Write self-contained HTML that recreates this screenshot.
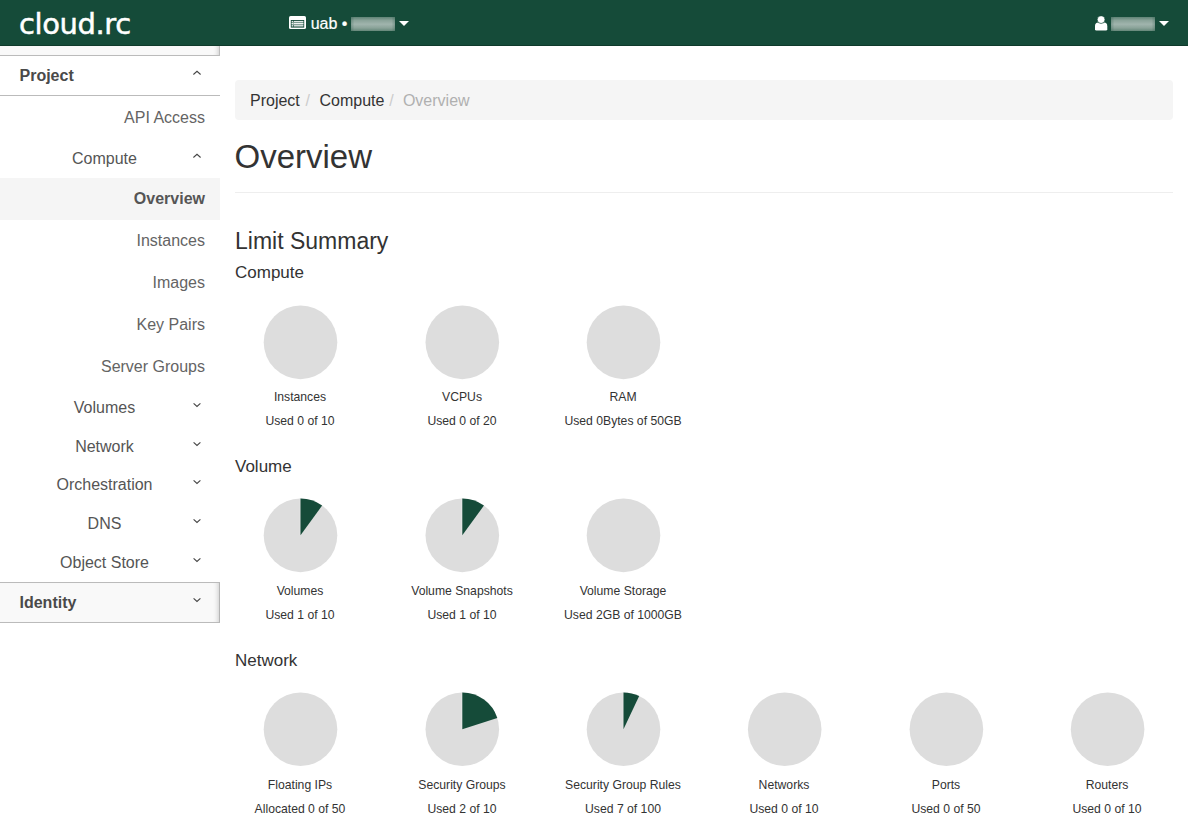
<!DOCTYPE html>
<html lang="en">
<head>
<meta charset="utf-8">
<title>Overview - cloud.rc</title>
<style>
*{box-sizing:border-box}
html,body{margin:0;padding:0}
body{width:1188px;height:826px;overflow:hidden;background:#fff;font-family:"Liberation Sans",sans-serif;font-size:14px;line-height:20px;color:#333;position:relative}
#navbar{position:absolute;left:0;top:0;width:1188px;height:46px;background:#154b39;border-bottom:1px solid #0f3a2b}
#logo{position:absolute;left:19px;top:6px;font-family:"DejaVu Sans","Liberation Sans",sans-serif;font-size:29px;line-height:36px;color:#fff;letter-spacing:-0.4px;-webkit-text-stroke:0.5px #fff}
.ctx{position:absolute;-webkit-text-stroke:0.2px #fff;top:14px;height:20px;color:#fff;font-size:16px;line-height:20px;white-space:nowrap}
.blur{position:absolute;width:44px;height:14px;background:linear-gradient(to right,rgba(21,75,57,.25),rgba(21,75,57,0) 8%,rgba(21,75,57,0) 92%,rgba(21,75,57,.25)),linear-gradient(to bottom,#5f8376 0%,#8ba49a 25%,#a0b4ad 52%,#8aa399 78%,#658779 100%)}
.caret{position:absolute;width:0;height:0;border-left:5.2px solid transparent;border-right:5.2px solid transparent;border-top:5.6px solid #fff}
.nv{position:absolute;display:block}
#sidebar{position:absolute;left:0;top:46px;width:220px;height:780px}
#sidebar .top{height:10px;background:#f9f9f9;border-right:1px solid #bdbdbd;border-bottom:1px solid #bbb;box-shadow:inset -5px 0 5px -4px rgba(0,0,0,.18)}
.hdr{position:relative;height:40px;border-bottom:1px solid #bbb;font-weight:bold;font-size:16px;color:#4a4a4a;padding:10px 0 0 19.5px;line-height:20px;background:#fff}
.hdr.closed{background:#f9f9f9;border-top:1px solid #bbb;border-right:1px solid #b5b5b5;box-shadow:inset -5px 0 5px -4px rgba(0,0,0,.18)}
.chev{position:absolute;left:192px;width:10px;height:6px}
.item{position:absolute;right:0;width:220px;height:42px;text-align:right;padding:11px 15px 0 0;font-size:16px;line-height:20px;color:#646464}
.item.active{background:#f5f5f5;font-weight:bold;color:#555}
.sub{position:absolute;left:0;width:209px;text-align:center;font-size:16px;line-height:20px;color:#555}
#main{position:absolute;left:235px;top:46px;width:938px}
#crumb{position:absolute;left:0;top:34px;width:938px;height:40px;background:#f5f5f5;border-radius:4px;font-size:16px;line-height:20px;padding:11px 15px 9px;color:#b0b0b0;white-space:nowrap}
#crumb b{font-weight:normal;color:#333}
#crumb i{font-style:normal;color:#ccc;padding:0 5.2px 0 5.6px}
h1{position:absolute;left:-0.5px;top:91px;margin:0;font-size:33px;line-height:40px;font-weight:normal;color:#333}
#hr{position:absolute;left:0;top:146px;width:938px;height:1px;background:#eee}
h3{position:absolute;left:0;top:181px;margin:0;font-size:23px;line-height:28px;font-weight:normal;color:#333}
h4{position:absolute;left:0;margin:0;font-size:17px;line-height:20px;font-weight:normal;color:#333}
.pie{position:absolute;width:162px;height:0;font-size:12.2px;line-height:17px;color:#333}
.pie svg{position:absolute;left:31px;top:0;width:100px;height:100px}
.pie .t,.pie .u{position:absolute;left:-19px;width:200px;text-align:center;white-space:nowrap}
</style>
</head>
<body>
<div id="navbar">
  <div id="logo">cloud.rc</div>
  <svg class="nv" style="left:289px;top:16px" width="17" height="13" viewBox="0 0 17 13"><rect x="0" y="0" width="17" height="13" rx="1.6" fill="#fff"/><rect x="1.8" y="4" width="13.4" height="7.6" fill="#154b39"/><g fill="#fff" opacity=".88"><rect x="2.6" y="4.9" width="1.6" height="1.1"/><rect x="4.8" y="4.9" width="9.6" height="1.1"/><rect x="2.6" y="7" width="1.6" height="1.1"/><rect x="4.8" y="7" width="9.6" height="1.1"/><rect x="2.6" y="9.1" width="1.6" height="1.4"/><rect x="4.8" y="9.1" width="9.6" height="1.4"/></g><rect x="2.6" y="6" width="11.8" height="3.1" fill="#fff" opacity=".45"/></svg>
  <div class="ctx" style="left:310.7px">uab •</div>
  <div class="blur" style="left:351px;top:17px"></div>
  <div class="caret" style="left:399px;top:21px"></div>
  <svg class="nv" style="left:1095px;top:16px" width="13" height="15" viewBox="0 0 13 15"><path d="M0 13.2 V10.2 Q0 6.6 3.2 6.6 H9.1 Q12.3 6.6 12.3 10.2 V13.2 Q12.3 14.6 10.9 14.6 H1.4 Q0 14.6 0 13.2 Z" fill="#fff"/><circle cx="6.1" cy="3.6" r="3.9" fill="#fff" stroke="#154b39" stroke-width="0.7"/></svg>
  <div class="blur" style="left:1111px;top:17px"></div>
  <div class="caret" style="left:1159px;top:21px"></div>
</div>

<div id="sidebar">
  <div class="top"></div>
  <div class="hdr">Project</div>
  <div class="item" style="top:51px">API Access</div>
  <div class="item active" style="top:132px">Overview</div>
  <div class="item" style="top:174px">Instances</div>
  <div class="item" style="top:216px">Images</div>
  <div class="item" style="top:258px">Key Pairs</div>
  <div class="item" style="top:300px">Server Groups</div>
  <div class="sub" style="top:103px">Compute</div>
  <svg class="chev" style="top:107px" viewBox="0 0 10 6"><path d="M1.4 4.5 L5 1.3 L8.6 4.5" fill="none" stroke="#444" stroke-width="1.1"/></svg>
  <div class="sub" style="top:352px">Volumes</div>
  <svg class="chev" style="top:356px" viewBox="0 0 10 6"><path d="M1.6 1.3 L5 4.5 L8.4 1.3" fill="none" stroke="#444" stroke-width="1.1"/></svg>
  <div class="sub" style="top:391px">Network</div>
  <svg class="chev" style="top:395px" viewBox="0 0 10 6"><path d="M1.6 1.3 L5 4.5 L8.4 1.3" fill="none" stroke="#444" stroke-width="1.1"/></svg>
  <div class="sub" style="top:429px">Orchestration</div>
  <svg class="chev" style="top:433px" viewBox="0 0 10 6"><path d="M1.6 1.3 L5 4.5 L8.4 1.3" fill="none" stroke="#444" stroke-width="1.1"/></svg>
  <div class="sub" style="top:468px">DNS</div>
  <svg class="chev" style="top:472px" viewBox="0 0 10 6"><path d="M1.6 1.3 L5 4.5 L8.4 1.3" fill="none" stroke="#444" stroke-width="1.1"/></svg>
  <div class="sub" style="top:507px">Object Store</div>
  <svg class="chev" style="top:511px" viewBox="0 0 10 6"><path d="M1.6 1.3 L5 4.5 L8.4 1.3" fill="none" stroke="#444" stroke-width="1.1"/></svg>
  <svg class="chev" style="top:24px" viewBox="0 0 10 6"><path d="M1.4 4.5 L5 1.3 L8.6 4.5" fill="none" stroke="#444" stroke-width="1.1"/></svg>
  <div class="hdr closed" style="position:absolute;left:0;top:536px;width:220px;height:41px">Identity</div>
  <svg class="chev" style="top:551px" viewBox="0 0 10 6"><path d="M1.6 1.3 L5 4.5 L8.4 1.3" fill="none" stroke="#444" stroke-width="1.1"/></svg>
</div>

<div id="main">
  <div id="crumb"><b>Project</b><i>/</i> <b>Compute</b><i style="padding:0 4.8px 0 4.8px">/</i> Overview</div>
  <h1>Overview</h1>
  <div id="hr"></div>
  <h3>Limit Summary</h3>
  <h4 style="top:217px">Compute</h4>
  <h4 style="top:411px">Volume</h4>
  <h4 style="top:605px">Network</h4>
  <div class="pie" style="left:-16px;top:246px"><svg viewBox="0 0 100 100"><circle cx="50.50" cy="50.35" r="36.8" fill="#ddd"/></svg><div class="t" style="top:97px">Instances</div><div class="u" style="top:121px">Used 0 of 10</div></div>
  <div class="pie" style="left:146px;top:246px"><svg viewBox="0 0 100 100"><circle cx="50.30" cy="50.35" r="36.8" fill="#ddd"/></svg><div class="t" style="top:97px">VCPUs</div><div class="u" style="top:121px">Used 0 of 20</div></div>
  <div class="pie" style="left:307px;top:246px"><svg viewBox="0 0 100 100"><circle cx="50.50" cy="50.35" r="36.8" fill="#ddd"/></svg><div class="t" style="top:97px">RAM</div><div class="u" style="top:121px">Used 0Bytes of 50GB</div></div>
  <div class="pie" style="left:-16px;top:439px"><svg viewBox="0 0 100 100"><circle cx="50.50" cy="50.35" r="36.8" fill="#ddd"/><rect x="49.60" y="13.55" width="0.9" height="36.80" fill="#e6e6e6"/><path d="M50.50 50.35 L50.50 13.55 A36.8 36.8 0 0 1 72.13 20.58 Z" fill="#154b39"/></svg><div class="t" style="top:98px">Volumes</div><div class="u" style="top:122px">Used 1 of 10</div></div>
  <div class="pie" style="left:146px;top:439px"><svg viewBox="0 0 100 100"><circle cx="50.30" cy="50.35" r="36.8" fill="#ddd"/><rect x="49.40" y="13.55" width="0.9" height="36.80" fill="#e6e6e6"/><path d="M50.30 50.35 L50.30 13.55 A36.8 36.8 0 0 1 71.93 20.58 Z" fill="#154b39"/></svg><div class="t" style="top:98px">Volume Snapshots</div><div class="u" style="top:122px">Used 1 of 10</div></div>
  <div class="pie" style="left:307px;top:439px"><svg viewBox="0 0 100 100"><circle cx="50.50" cy="50.35" r="36.8" fill="#ddd"/></svg><div class="t" style="top:98px">Volume Storage</div><div class="u" style="top:122px">Used 2GB of 1000GB</div></div>
  <div class="pie" style="left:-16px;top:633px"><svg viewBox="0 0 100 100"><circle cx="50.50" cy="50.30" r="36.8" fill="#ddd"/></svg><div class="t" style="top:98px">Floating IPs</div><div class="u" style="top:122px">Allocated 0 of 50</div></div>
  <div class="pie" style="left:146px;top:633px"><svg viewBox="0 0 100 100"><circle cx="50.30" cy="50.30" r="36.8" fill="#ddd"/><rect x="49.40" y="13.50" width="0.9" height="36.80" fill="#e6e6e6"/><path d="M50.30 50.30 L50.30 13.50 A36.8 36.8 0 0 1 85.30 38.93 Z" fill="#154b39"/></svg><div class="t" style="top:98px">Security Groups</div><div class="u" style="top:122px">Used 2 of 10</div></div>
  <div class="pie" style="left:307px;top:633px"><svg viewBox="0 0 100 100"><circle cx="50.50" cy="50.30" r="36.8" fill="#ddd"/><rect x="49.60" y="13.50" width="0.9" height="36.80" fill="#e6e6e6"/><path d="M50.50 50.30 L50.50 13.50 A36.8 36.8 0 0 1 66.17 17.00 Z" fill="#154b39"/></svg><div class="t" style="top:98px">Security Group Rules</div><div class="u" style="top:122px">Used 7 of 100</div></div>
  <div class="pie" style="left:468px;top:633px"><svg viewBox="0 0 100 100"><circle cx="50.70" cy="50.30" r="36.8" fill="#ddd"/></svg><div class="t" style="top:98px">Networks</div><div class="u" style="top:122px">Used 0 of 10</div></div>
  <div class="pie" style="left:630px;top:633px"><svg viewBox="0 0 100 100"><circle cx="50.40" cy="50.30" r="36.8" fill="#ddd"/></svg><div class="t" style="top:98px">Ports</div><div class="u" style="top:122px">Used 0 of 50</div></div>
  <div class="pie" style="left:791px;top:633px"><svg viewBox="0 0 100 100"><circle cx="50.60" cy="50.30" r="36.8" fill="#ddd"/></svg><div class="t" style="top:98px">Routers</div><div class="u" style="top:122px">Used 0 of 10</div></div>
</div>
</body>
</html>
